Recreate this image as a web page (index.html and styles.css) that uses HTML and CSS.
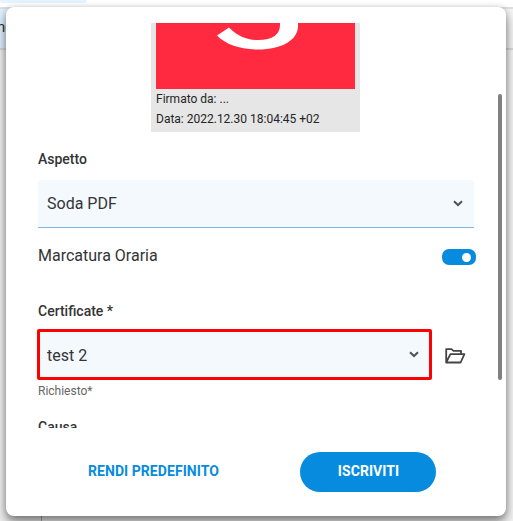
FILE: index.html
```html
<!DOCTYPE html>
<html lang="it">
<head>
<meta charset="utf-8">
<title>Firma</title>
<link rel="stylesheet" href="styles.css">
</head>
<body>
<div class="app">
  <div class="tabs"><div class="tab"></div></div>
  <div class="toolbar"><div class="tool">ne</div></div>
  <div class="workspace"><div class="side"></div><div class="canvas"></div></div>
</div>
<div class="dialog">
  <div class="scroll">
    <div class="preview">
      <div class="logo">
        <svg width="199" height="66" viewBox="0 0 199 66"><path d="M61 12.500L73 4.500C82 13.500 91 17 102 17C117 17 124 11 124 2V-2H142V3C142 17 126 26.500 102 26.500C84 26.500 69 21 61 12.500Z" fill="#fff"/></svg>
      </div>
      <p class="line">Firmato da: ...</p>
      <p class="line data">Data: 2022.12.30 18:04:45 +02</p>
    </div>
    <div class="label">Aspetto</div>
    <div class="select">
      <span class="soda">Soda PDF</span>
      <svg class="chev" width="10" height="7" viewBox="0 0 10 7"><path d="M1 1.200L5 5L9 1.200" /></svg>
    </div>
    <div class="timestamp"><span class="marc">Marcatura Oraria</span><div class="switch"><div class="knob"></div></div></div>
    <div class="label cert">Certificate *</div>
    <div class="certrow">
      <div class="select required">
        <span class="test">test 2</span>
        <svg class="chev" width="10" height="7" viewBox="0 0 10 7"><path d="M1 1.200L5 5L9 1.200" /></svg>
      </div>
      <svg class="folder" width="21" height="16" viewBox="0 0 21 16"><path d="M1.200 14.500V1.100H6.500L8.500 2.900H16V6.200M1.200 14.500L5.400 6.200H19.400L15.600 14.500Z"/></svg>
    </div>
    <div class="hint">Richiesto*</div>
    <div class="label causa">Causa</div>
  </div>
  <div class="actions">
    <div class="default"><span class="rendi">RENDI PREDEFINITO</span></div>
    <div class="submit"><span class="iscr">ISCRIVITI</span></div>
  </div>
  <div class="scrollbar"></div>
</div>
</body>
</html>
```
FILE: styles.css
```css
* { box-sizing: border-box; }
body { margin: 0; width: 513px; height: 521px; overflow: hidden; position: relative; background: #fff; font-family: Roboto, sans-serif; color: #333436; }
p { margin: 0; }
.app { height: 521px; display: flex; flex-direction: column; }
.tabs { height: 7px; }
.tab { width: 87px; height: 3px; background: #e4f3fe; border-radius: 0 0 12px 12px; }
.toolbar { height: 43px; border-top: 2px solid #dedede; border-bottom: 2px solid #d8d8d8; background: #f4f4f4; }
.tool { width: 60px; height: 39px; background: #dff0fc; font-size: 15px; line-height: 37px; margin-left: -3px; }
.workspace { flex: 1; display: flex; background: #f4f4f4; }
.side { width: 42px; border-right: 1px solid #aaa; background: #f0f0f0; }
.canvas { flex: 1; }
.dialog { position: absolute; left: 6px; top: 7px; width: 500px; height: 509px; background: #fff; border-radius: 8px; box-shadow: 0 7px 12px rgba(0,0,0,.42), 0 1px 6px rgba(0,0,0,.22); padding-top: 16px; }
.scroll { height: 405px; overflow: hidden; padding-left: 32px; white-space: nowrap; }
.preview { margin-left: 113px; width: 209px; height: 109px; padding: 0 5px; background: #e6e6e6; }
.logo { height: 66px; background: #ff2940; overflow: hidden; }
.logo svg { display: block; }
.line { font-size: 12px; line-height: 20px; color: #242424; }
.label { font-size: 14px; font-weight: 500; line-height: 20px; margin-top: 17px; }
.select { width: 436px; height: 48px; margin-top: 11px; padding: 0 11px 0 9px; display: flex; align-items: center; justify-content: space-between; background: #f4f9fe; border-bottom: 1px solid #7bb5df; border-radius: 4px 4px 0 0; font-size: 16px; }
.chev { fill: none; stroke: #505357; stroke-width: 2; }
.timestamp { display: flex; justify-content: space-between; align-items: center; width: 438px; height: 24px; margin-top: 17px; font-size: 16px; }
.marc { padding-bottom: 3px; }
.switch { width: 34px; height: 16px; border-radius: 7px; background: #078bdf; padding: 3.500px 5px; display: flex; justify-content: flex-end; }
.knob { width: 9px; height: 9px; border-radius: 50%; background: #fff; }
.cert { margin-top: 32px; }
.certrow { display: flex; align-items: center; gap: 13px; margin: 8px 0 0 -1px; }
.required { width: 395px; height: 51px; margin: 0; border: 3px solid #f00; border-radius: 2px; padding: 0 10px 0 7px; }
.test { padding-top: 2px; }
.folder { fill: none; stroke: #444; stroke-width: 1.800; stroke-linejoin: round; margin-top: 3px; }
.hint { font-size: 12px; line-height: 16px; margin-top: 3px; color: #666; }
.causa { margin-top: 18px; }
.actions { display: flex; align-items: center; height: 40px; margin: 24px 70px 0 82px; justify-content: space-between; font-size: 14px; font-weight: 700; letter-spacing: .06px; white-space: nowrap; }
.rendi, .iscr { display: block; padding-bottom: 2px; }
.default { color: #078bdf; }
.submit { width: 136px; height: 40px; border-radius: 20px; background: #078bdf; color: #fff; display: flex; align-items: center; justify-content: center; }
.iscr { padding-left: 1px; }
.scrollbar { position: absolute; left: 492px; top: 87px; width: 4px; height: 286px; border-radius: 2px; background: #808080; }
```
